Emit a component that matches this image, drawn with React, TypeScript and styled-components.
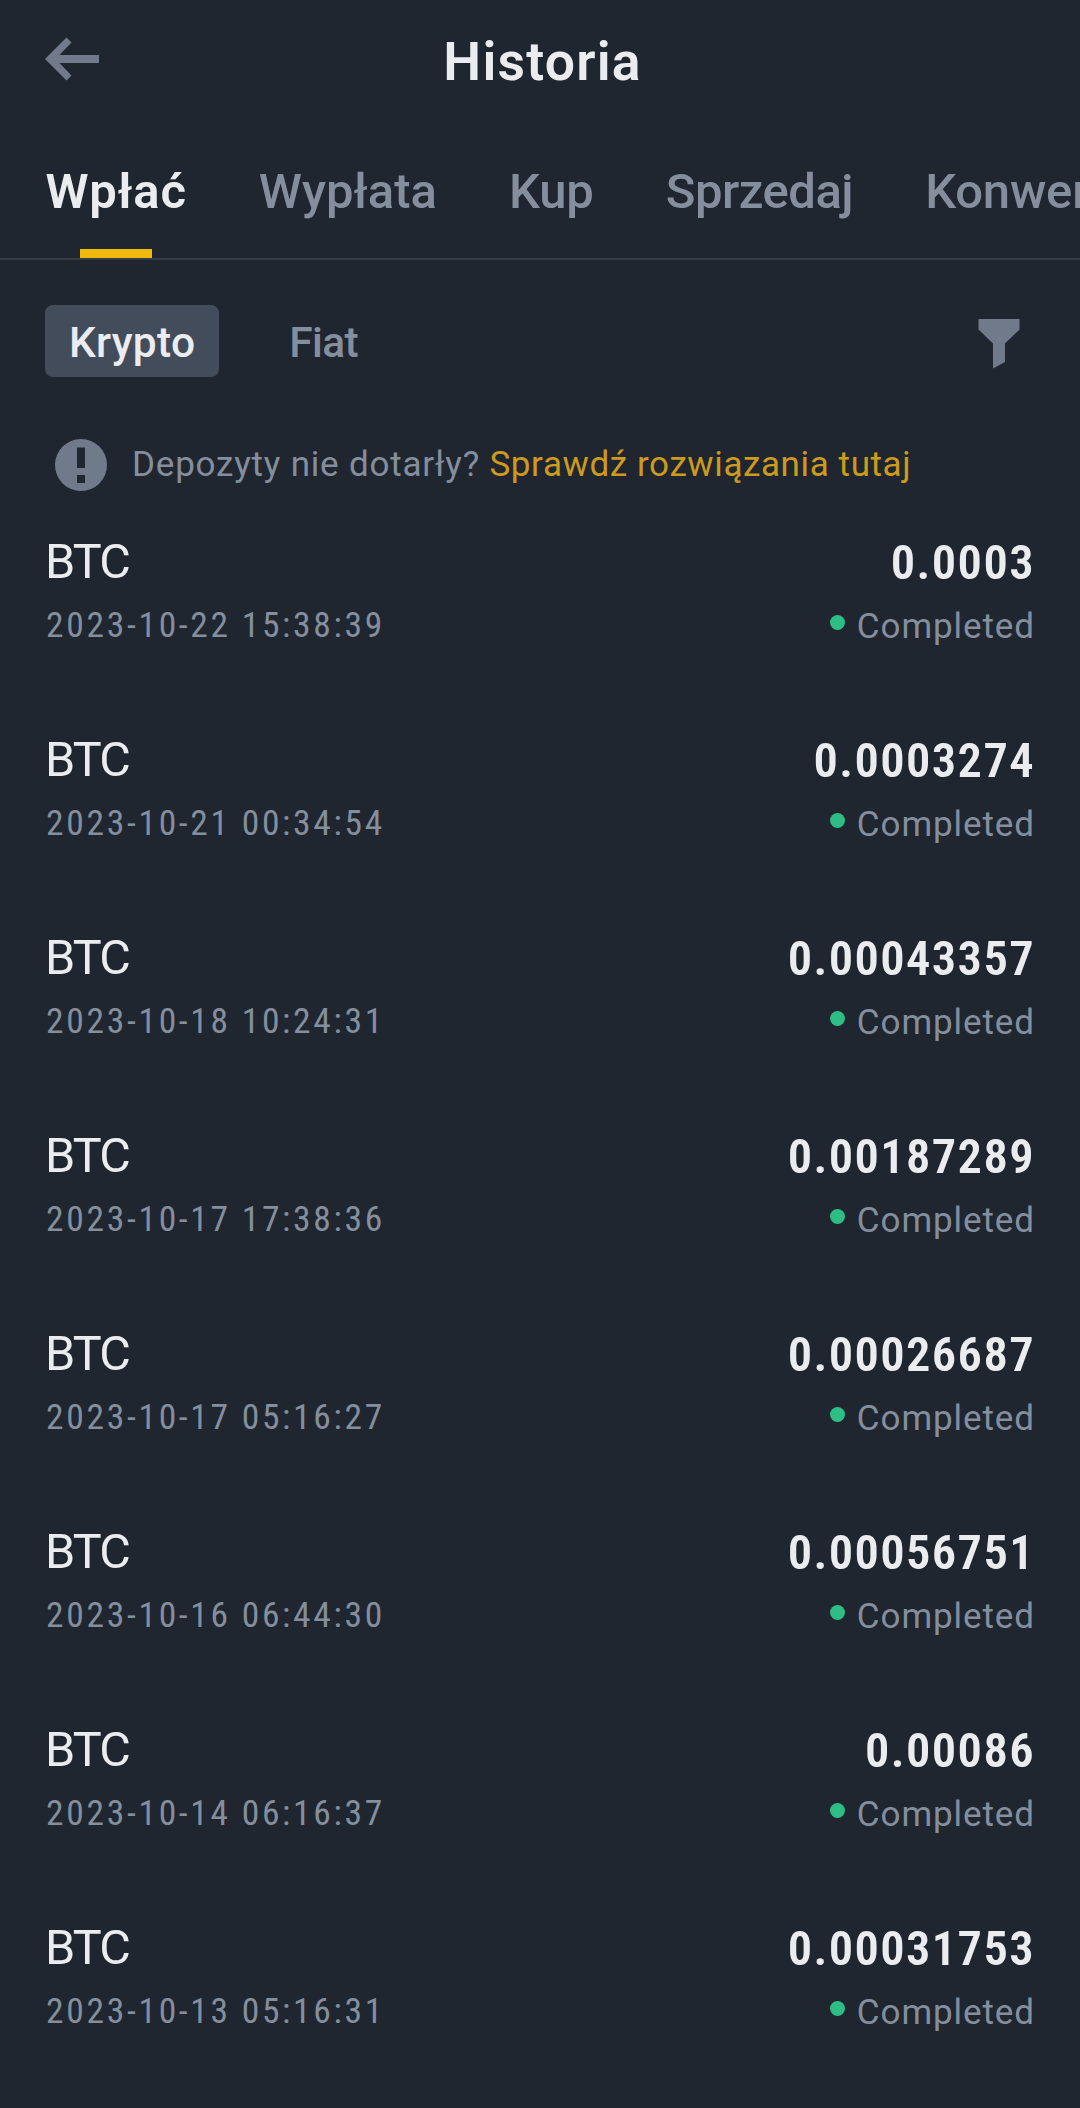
import React from "react";
import styled, { createGlobalStyle } from "styled-components";

const color = {
  bg: "#202630",
  text: "#eaecef",
  muted: "#848e9c",
  icon: "#717a8b",
  pill: "#434c5a",
  line: "#333b47",
  yellow: "#f0b90b",
  link: "#cc9a1c",
  green: "#2ebd85",
};

const GlobalStyle = createGlobalStyle`
  *, *::before, *::after { box-sizing: border-box; }
  body {
    margin: 0;
    background: ${color.bg};
    color: ${color.text};
    font-family: Roboto, "Noto Sans", sans-serif;
    overflow-x: hidden;
  }
`;

const Screen = styled.main`
  width: 1080px;
  height: 2108px;
  overflow: hidden;
  background: ${color.bg};
  display: flex;
  flex-direction: column;

  > * {
    flex-shrink: 0;
  }
`;

const Header = styled.header`
  height: 124px;
  display: grid;
  grid-template-columns: 120px 1fr 120px;
  align-items: center;
  padding: 0 44px;
`;

const BackButton = styled.button`
  display: flex;
  border: 0;
  padding: 0;
  margin: 0 0 6px 1px;
  background: none;
`;

const Title = styled.h1`
  margin: 0 0 0 5px;
  text-align: center;
  font-size: 53.5px;
  line-height: 64px;
  font-weight: 600;
  letter-spacing: 1.2px;
`;

const Tabs = styled.nav`
  height: 136px;
  display: flex;
  gap: 72px;
  padding-left: 45.5px;
  border-bottom: 2px solid ${color.line};
`;

const Tab = styled.a<{ $active?: boolean; $spacing: number }>`
  position: relative;
  flex: none;
  padding-top: 38px;
  font-size: 49px;
  line-height: 60px;
  font-weight: ${(p) => (p.$active ? 600 : 500)};
  letter-spacing: ${(p) => p.$spacing}px;
  color: ${(p) => (p.$active ? color.text : color.muted)};

  &::after {
    content: ${(p) => (p.$active ? '""' : "none")};
    position: absolute;
    bottom: 0;
    left: 50%;
    width: 72px;
    height: 9px;
    margin-left: -36px;
    background: ${color.yellow};
  }
`;

const FilterBar = styled.div`
  display: flex;
  align-items: center;
  gap: 46px;
  height: 72px;
  margin-top: 45px;
  padding: 0 60px 0 45px;
`;

const Chip = styled.button<{ $active?: boolean; $spacing: number }>`
  height: 72px;
  border: 0;
  border-radius: 8px;
  padding: 3px 24px 0;
  font-family: inherit;
  font-size: 42.5px;
  line-height: 60px;
  font-weight: 500;
  letter-spacing: ${(p) => p.$spacing}px;
  background: ${(p) => (p.$active ? color.pill : "transparent")};
  color: ${(p) => (p.$active ? color.text : color.muted)};
`;

const FilterButton = styled.button`
  display: flex;
  margin: 5px 0 0 auto;
  border: 0;
  padding: 0;
  background: none;
`;

const Notice = styled.div`
  display: flex;
  align-items: center;
  gap: 25px;
  height: 60px;
  margin-top: 58px;
  padding-left: 55px;
`;

const NoticeText = styled.p`
  margin: 0;
  font-size: 35px;
  line-height: 60px;
  letter-spacing: 0.8px;
  color: ${color.muted};
  white-space: nowrap;
`;

const NoticeLink = styled.a`
  color: ${color.link};
  letter-spacing: 0.6px;
`;

const List = styled.ul`
  list-style: none;
  margin: 36px 0 0;
  padding: 0 45px;
`;

const Row = styled.li`
  height: 198px;
  display: flex;
  justify-content: space-between;
`;

const Asset = styled.div`
  display: flex;
  flex-direction: column;
`;

const Coin = styled.span`
  font-size: 48.5px;
  line-height: 61px;
  letter-spacing: -1.8px;
`;

const Time = styled.time`
  margin-left: 1px;
  font-size: 35.5px;
  font-stretch: 75%;
  line-height: 66px;
  letter-spacing: 2.7px;
  color: ${color.muted};
`;

const Result = styled.div`
  display: flex;
  flex-direction: column;
  align-items: flex-end;
`;

const Amount = styled.span`
  font-size: 48.5px;
  font-stretch: 75%;
  line-height: 63px;
  font-weight: 600;
  letter-spacing: 1.4px;
`;

const Status = styled.span`
  display: flex;
  align-items: center;
  gap: 12px;
  font-size: 35px;
  line-height: 66px;
  letter-spacing: 0.92px;
  color: ${color.muted};
`;

const Dot = styled.i`
  width: 15px;
  height: 15px;
  margin-bottom: 9px;
  border-radius: 50%;
  background: ${color.green};
`;

const tabs = [
  { label: "Wpłać", spacing: 0.85, active: true },
  { label: "Wypłata", spacing: 0 },
  { label: "Kup", spacing: -0.1 },
  { label: "Sprzedaj", spacing: -0.5 },
  { label: "Konwersja", spacing: -0.2 },
];

const deposits = [
  ["2023-10-22 15:38:39", "0.0003"],
  ["2023-10-21 00:34:54", "0.0003274"],
  ["2023-10-18 10:24:31", "0.00043357"],
  ["2023-10-17 17:38:36", "0.00187289"],
  ["2023-10-17 05:16:27", "0.00026687"],
  ["2023-10-16 06:44:30", "0.00056751"],
  ["2023-10-14 06:16:37", "0.00086"],
  ["2023-10-13 05:16:31", "0.00031753"],
];

const ArrowIcon = () => (
  <svg width="54" height="44" viewBox="0 0 54 44" fill={color.icon}>
    <path d="M21.5 0.5 26.5 5.5 14.5 18H54V26H14.5L26.5 38.5 21.5 43.5 0 22Z" />
  </svg>
);

const FunnelIcon = () => (
  <svg width="42" height="50" viewBox="0 0 42 50" fill={color.icon}>
    <path d="M0.5 0H41.5V10.5L27 24.5V43L15 49.5V24.5L0.5 10.5Z" />
  </svg>
);

const AlertIcon = () => (
  <svg width="52" height="52" viewBox="0 0 52 52">
    <circle cx="26" cy="26" r="26" fill={color.icon} />
    <path d="M22 8.5H30V29H22ZM22 36H30V44H22Z" fill={color.bg} />
  </svg>
);

export default function App() {
  return (
    <Screen>
      <GlobalStyle />
      <Header>
        <BackButton aria-label="Wstecz">
          <ArrowIcon />
        </BackButton>
        <Title>Historia</Title>
      </Header>
      <Tabs>
        {tabs.map((t) => (
          <Tab key={t.label} $active={t.active} $spacing={t.spacing}>
            {t.label}
          </Tab>
        ))}
      </Tabs>
      <FilterBar>
        <Chip $active $spacing={0.26}>Krypto</Chip>
        <Chip $spacing={-0.68}>Fiat</Chip>
        <FilterButton aria-label="Filtruj">
          <FunnelIcon />
        </FilterButton>
      </FilterBar>
      <Notice>
        <AlertIcon />
        <NoticeText>
          Depozyty nie dotarły? <NoticeLink>Sprawdź rozwiązania tutaj</NoticeLink>
        </NoticeText>
      </Notice>
      <List>
        {deposits.map(([time, amount]) => (
          <Row key={time}>
            <Asset>
              <Coin>BTC</Coin>
              <Time>{time}</Time>
            </Asset>
            <Result>
              <Amount>{amount}</Amount>
              <Status>
                <Dot />
                Completed
              </Status>
            </Result>
          </Row>
        ))}
      </List>
    </Screen>
  );
}
